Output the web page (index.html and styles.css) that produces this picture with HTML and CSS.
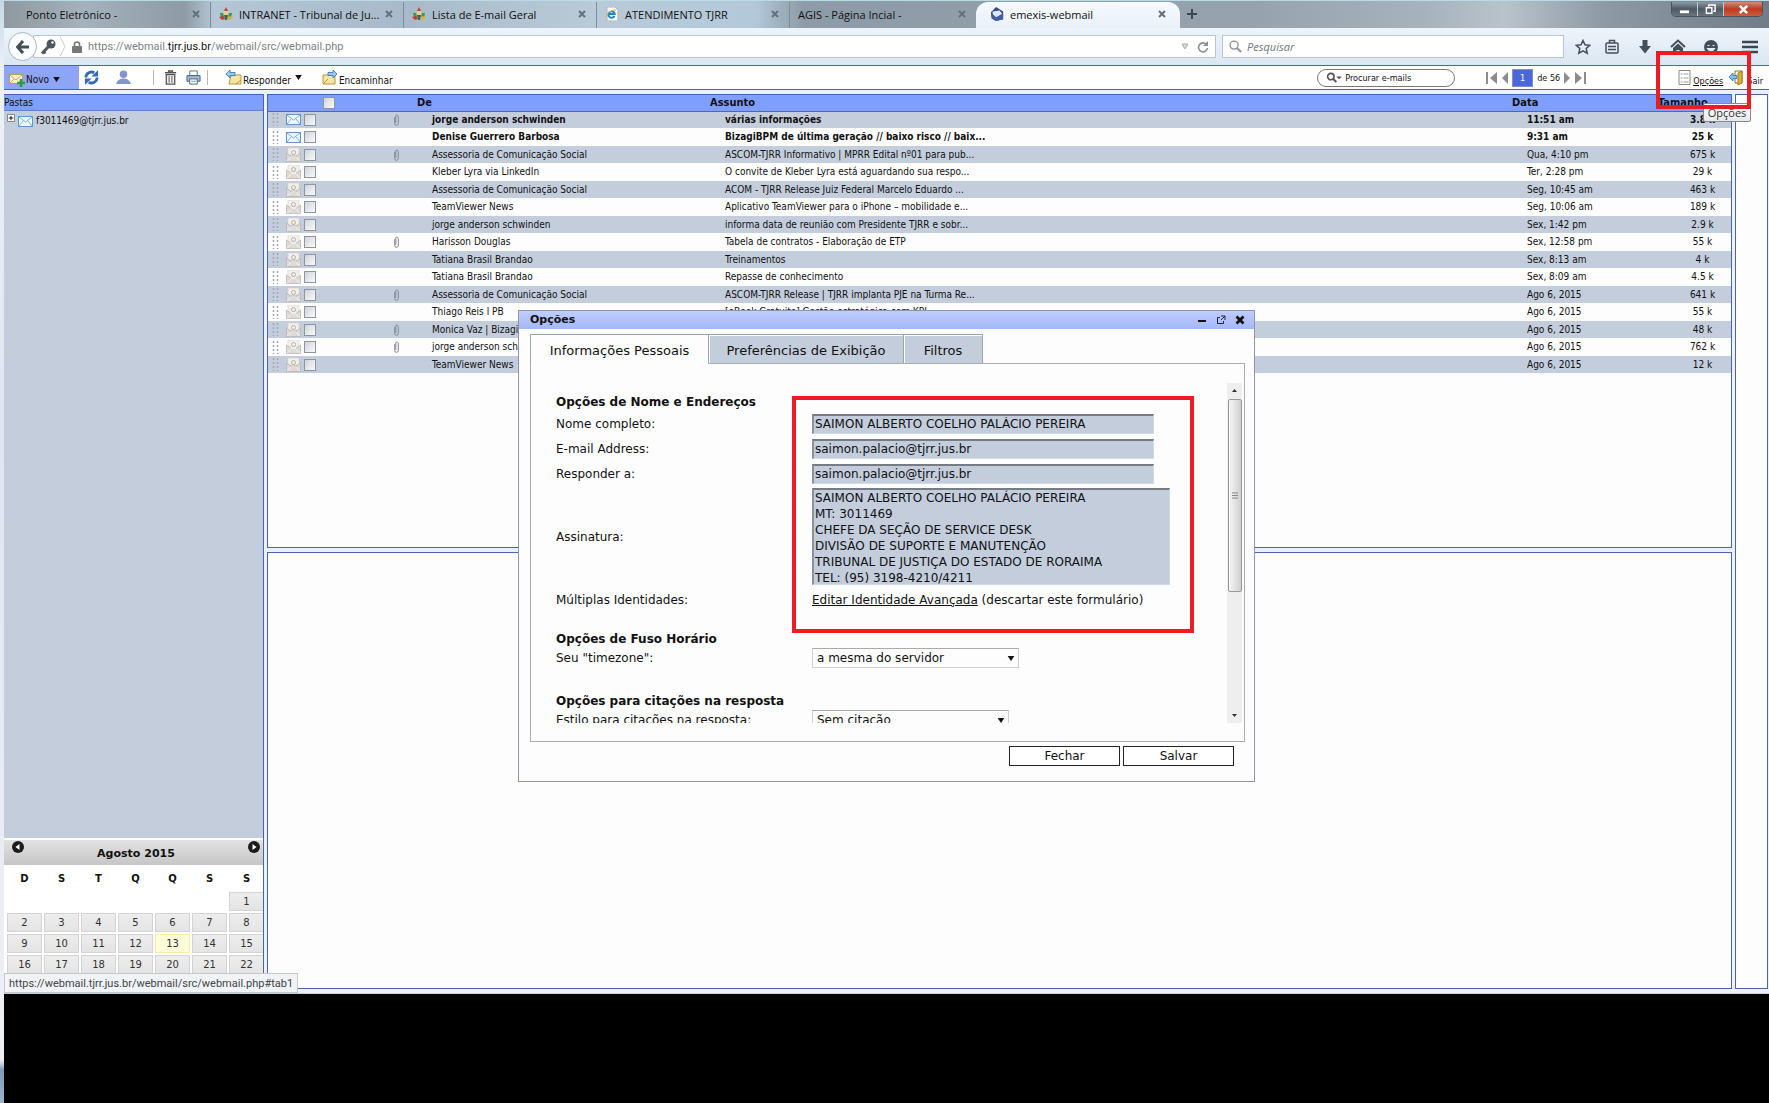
FILE: index.html
```html
<!DOCTYPE html>
<html lang="pt-BR">
<head>
<meta charset="utf-8">
<title>emexis-webmail</title>
<link rel="stylesheet" href="styles.css">
</head>
<body>
<svg class="defs" aria-hidden="true">
  <symbol id="crest" viewBox="0 0 14 14"><path d="M7 0l2 4H5z" fill="#c8402c"/><path d="M5 4h4v4H5z" fill="#e8d090"/><path d="M1 6l3 0 1 4-3 1z" fill="#3f9a48"/><path d="M13 6l-3 0-1 4 3 1z" fill="#3f9a48"/><path d="M0 10l4-1 2 3-3 1z" fill="#c83c30"/><path d="M14 10l-4-1-2 3 3 1z" fill="#d8b040"/><path d="M5 8h4l-1 5H6z" fill="#3c6a50"/></symbol>
  <symbol id="ie" viewBox="0 0 14 14"><path d="M2 0h8l3 3v11H2z" fill="#f8fafc" stroke="#a8b4c0"/><path d="M9.500 9a3.200 3.200 0 1 1 .300-2H4" fill="none" stroke="#1c86c8" stroke-width="1.800"/><path d="M1 10C2 5 7 3 11 3" fill="none" stroke="#e0b040"/></symbol>
  <symbol id="emexis" viewBox="0 0 16 16"><path d="M1 6l6-6 8 5v9l-8 2-5-3z" fill="#3a4a8c"/><path d="M3 5l8-1 3 4-7 4-4-4z" fill="#dfe6f8"/><path d="M1 7l6 5 8-5v7l-8 2-5-3z" fill="#4a5aa0"/></symbol>
  <symbol id="x" viewBox="0 0 8 8"><path d="M1 1l6 6M7 1L1 7" stroke="currentColor" stroke-width="2"/></symbol>
  <symbol id="mail-new" viewBox="0 0 15 11"><rect x=".5" y=".5" width="14" height="10" fill="#eef6ff" stroke="#5f97d2"/><path d="M1 1l6.500 5L14 1M1 10l4-5M14 10l-4-5" fill="none" stroke="#7fb0e0"/></symbol>
  <symbol id="mail-read" viewBox="0 0 15 14"><path d="M2 0h11v7H2z" fill="#f3efea" stroke="#d8d2cc" stroke-width=".6"/><circle cx="7.500" cy="4.500" r="2" fill="none" stroke="#b9afa6"/><path d="M.5 5l5 4h4l5-4v8.500H.5z" fill="#dedad6" stroke="#b8b2ac" stroke-width=".7"/><path d="M1 13l4.500-4h4L14 13" fill="none" stroke="#f4f2f0"/></symbol>
  <symbol id="clip" viewBox="0 0 5 12"><path d="M.7 3v6.500a1.800 1.800 0 0 0 3.600 0V2.500a1.500 1.500 0 0 0-2.500-1V9" fill="none" stroke="#808890"/></symbol>
  <symbol id="grip" viewBox="0 0 7 13"><path d="M1.500 0v13M5.500 0v13" stroke="#a3a8b3" stroke-width="1.500" stroke-dasharray="2 2" fill="none"/></symbol>
  <symbol id="down" viewBox="0 0 8 6"><path d="M0 0h8L4 6z" fill="currentColor"/></symbol>
</svg>

<div class="browser">
  <div class="tabstrip">
    <div class="tab"><span class="tab-title">Ponto Eletrônico -</span><button class="tab-close" aria-label="Fechar aba"><svg><use href="#x"/></svg></button></div>
    <div class="tab"><svg class="fav"><use href="#crest"/></svg><span class="tab-title">INTRANET - Tribunal de Ju...</span><button class="tab-close" aria-label="Fechar aba"><svg><use href="#x"/></svg></button></div>
    <div class="tab"><svg class="fav"><use href="#crest"/></svg><span class="tab-title">Lista de E-mail Geral</span><button class="tab-close" aria-label="Fechar aba"><svg><use href="#x"/></svg></button></div>
    <div class="tab"><svg class="fav"><use href="#ie"/></svg><span class="tab-title">ATENDIMENTO TJRR</span><button class="tab-close" aria-label="Fechar aba"><svg><use href="#x"/></svg></button></div>
    <div class="tab last"><span class="tab-title">AGIS - Página Incial -</span><button class="tab-close" aria-label="Fechar aba"><svg><use href="#x"/></svg></button></div>
    <div class="tab active"><svg class="fav"><use href="#emexis"/></svg><span class="tab-title">emexis-webmail</span><button class="tab-close" aria-label="Fechar aba"><svg><use href="#x"/></svg></button></div>
    <button class="new-tab" aria-label="Nova aba"><svg viewBox="0 0 10 10"><path d="M5 0v10M0 5h10" stroke="#3c4852" stroke-width="2"/></svg></button>
    <div class="win-buttons">
      <button aria-label="Minimizar"><svg viewBox="0 0 12 12"><rect x="1" y="7" width="10" height="3" fill="#fff"/></svg></button>
      <button aria-label="Restaurar"><svg viewBox="0 0 12 12"><path d="M4 3V1h7v7H9M1.500 4h6v6h-6z" fill="none" stroke="#fff" stroke-width="1.600"/></svg></button>
      <button class="win-close" aria-label="Fechar"><svg viewBox="0 0 12 12"><path d="M2 2l8 8M10 2l-8 8" stroke="#fff" stroke-width="2.800"/></svg></button>
    </div>
  </div>

  <div class="navbar">
    <button class="back" aria-label="Voltar"><svg viewBox="0 0 14 14"><path d="M7 1L1.500 7 7 13M2 7h11" fill="none" stroke="#454f5a" stroke-width="3"/></svg></button>
    <div class="urlbox">
      <svg class="key" viewBox="0 0 16 16"><path d="M9 7L2 14.500" stroke="#4c565f" stroke-width="3"/><path d="M3 12l2.500 2.500" stroke="#4c565f" stroke-width="2"/><circle cx="11" cy="5" r="4.500" fill="#4c565f"/><circle cx="12.500" cy="3.500" r="1.200" fill="#fff"/></svg>
      <svg class="chev" viewBox="0 0 6 20"><path d="M0 0l5 10-5 10" fill="none" stroke="#c9d0d8"/></svg>
      <svg class="lock" viewBox="0 0 10 12"><path d="M2.500 6V3.500a2.500 2.500 0 0 1 5 0V6" fill="none" stroke="#777" stroke-width="1.600"/><rect y="5" width="10" height="7" rx="1" fill="#777"/></svg>
      <span class="url">https://webmail.<b>tjrr.jus.br</b>/webmail/src/webmail.php</span>
      <svg class="url-down" viewBox="0 0 8 7"><path d="M1 1h6L4 6z" fill="#ddd" stroke="#aaa"/></svg>
      <svg class="reload" viewBox="0 0 12 12"><path d="M9.500 3.500A4.500 4.500 0 1 0 10.500 7" fill="none" stroke="#8a9096" stroke-width="1.700"/><path d="M11 0v5H6z" fill="#8a9096"/></svg>
    </div>
    <label class="searchbox"><svg viewBox="0 0 14 14"><circle cx="5.500" cy="5.500" r="4.300" fill="none" stroke="#8b9299" stroke-width="1.500"/><path d="M8.500 8.500l4.500 4.500" stroke="#8b9299" stroke-width="2.200"/></svg><input type="text" placeholder="Pesquisar" aria-label="Pesquisar"></label>
    <div class="nav-icons">
      <button class="star" aria-label="Favoritos"><svg viewBox="0 0 16 16"><path d="M8 1.500l2 4.300 4.700.5-3.500 3.200 1 4.700L8 11.900l-4.200 2.300 1-4.700L1.300 6.300 6 5.800z" fill="none" stroke="#454f5a" stroke-width="1.500"/></svg></button>
      <button aria-label="Lista"><svg viewBox="0 0 16 16"><rect x="2" y="4" width="12" height="10" rx="1" fill="none" stroke="#454f5a" stroke-width="1.500"/><path d="M5.500 4V1.500h5V4M4 7.500h8M4 10.500h8" fill="none" stroke="#454f5a" stroke-width="1.500"/></svg></button>
      <button aria-label="Downloads"><svg viewBox="0 0 16 16"><path d="M5.500 1h5v6H14l-6 7.500L2 7h3.500z" fill="#454f5a"/></svg></button>
      <button aria-label="Início"><svg viewBox="0 0 16 16"><path d="M1 8l7-6.500L15 8" fill="none" stroke="#454f5a" stroke-width="2"/><path d="M3 9l5-4.500L13 9v6H9.500v-4h-3v4H3z" fill="#454f5a"/></svg></button>
      <button aria-label="Hello"><svg viewBox="0 0 16 16"><circle cx="8" cy="8" r="7" fill="#454f5a"/><path d="M4.500 6.500h2M9.500 6.500h2M4 9.500c2 3 6 3 8 0z" stroke="#e4ecf5" fill="#e4ecf5"/></svg></button>
      <button class="menu" aria-label="Menu"><svg viewBox="0 0 16 16"><path d="M0 3h16M0 8h16M0 13h16" stroke="#3c4650" stroke-width="2.600"/></svg></button>
    </div>
  </div>

  <div class="toolbar">
    <button class="novo"><svg viewBox="0 0 16 14"><rect x=".5" y="1.500" width="13" height="9" fill="#fff6c0" stroke="#c0a040"/><path d="M1 2l6 5 6-5M1 10l4-4" fill="none" stroke="#c8a850"/><path d="M12 6v8M8 10h8" stroke="#2f9c3c" stroke-width="2.600"/></svg>Novo<svg class="caret"><use href="#down"/></svg></button>
    <button class="t-refresh" aria-label="Atualizar"><svg viewBox="0 0 16 16"><path d="M2 8a6 6 0 0 1 9-5" fill="none" stroke="#3569bd" stroke-width="3"/><path d="M8 7h7V0z" fill="#3569bd"/><path d="M14 8a6 6 0 0 1-9 5" fill="none" stroke="#3569bd" stroke-width="3"/><path d="M8 9H1v7z" fill="#3569bd"/></svg></button>
    <button class="t-user" aria-label="Contatos"><svg viewBox="0 0 16 16"><circle cx="8" cy="4.500" r="4" fill="#8494cc"/><path d="M0 15c1-4 4-6 8-6s7 2 8 6z" fill="#8494cc"/></svg></button>
    <span class="sep"></span>
    <button class="t-trash" aria-label="Excluir"><svg viewBox="0 0 16 16"><path d="M2 3h12M6 2.500V1h4v1.500" fill="none" stroke="#555" stroke-width="1.500"/><path d="M3.500 5h9v10h-9z" fill="#eee" stroke="#555" stroke-width="1.400"/><path d="M6.500 6.500v7M9.500 6.500v7" stroke="#555"/></svg></button>
    <button class="t-print" aria-label="Imprimir"><svg viewBox="0 0 16 16"><path d="M4 1h8v5H4z" fill="#fff" stroke="#55708c"/><path d="M1 6h14v6H1z" fill="#a8b8d0" stroke="#44607c"/><path d="M4 9.500h8V15H4z" fill="#fff" stroke="#44607c"/><path d="M5.500 12h5" stroke="#5f97d2"/></svg></button>
    <span class="sep"></span>
    <button class="t-reply"><svg viewBox="0 0 16 15"><path d="M5 5h10v9H3z" fill="#f3e6a4" stroke="#b89838"/><path d="M10 14l5-4" stroke="#b89838"/><path d="M0 4l4-4v2.500h5v3H4V8z" fill="#9ccaf0" stroke="#2f6eb4" stroke-width=".8"/></svg><span>Responder</span><svg class="caret"><use href="#down"/></svg></button>
    <button class="t-fwd"><svg viewBox="0 0 16 15"><path d="M1 5h12v9H1z" fill="#f3e6a4" stroke="#b89838"/><path d="M1 14l5-5" stroke="#b89838"/><path d="M15 4l-4-4v2.500H6v3h5V8z" fill="#9ccaf0" stroke="#2f6eb4" stroke-width=".8"/></svg><span>Encaminhar</span></button>
    <label class="mail-search"><svg viewBox="0 0 18 12"><circle cx="5" cy="5" r="3.500" fill="none" stroke="#555" stroke-width="1.800"/><path d="M7.500 7.500L11 11" stroke="#555" stroke-width="2.200"/><path d="M11 5h6l-3 3z" fill="#555"/></svg><input type="text" value="Procurar e-mails" aria-label="Procurar e-mails"></label>
    <div class="pager">
      <button aria-label="Primeira"><svg viewBox="0 0 12 12"><path d="M1 0v12" stroke="#8c8c8c" stroke-width="2"/><path d="M11 0v12L4 6z" fill="#8c8c8c"/></svg></button>
      <button class="step" aria-label="Anterior"><svg viewBox="0 0 6 12"><path d="M6 0v12L0 6z" fill="#8c8c8c"/></svg></button>
      <input class="page" type="text" value="1" aria-label="Página"><span>de 56</span>
      <button class="step" aria-label="Próxima"><svg viewBox="0 0 6 12"><path d="M0 0v12l6-6z" fill="#8c8c8c"/></svg></button>
      <button aria-label="Última"><svg viewBox="0 0 12 12"><path d="M11 0v12" stroke="#8c8c8c" stroke-width="2"/><path d="M1 0v12l7-6z" fill="#8c8c8c"/></svg></button>
    </div>
    <a class="opt-link" href="#tab1"><svg viewBox="0 0 12 15"><path d="M.5.500h11v14H.5z" fill="#fff" stroke="#8a8a8a"/><path d="M2 4h2M2 8h2M2 12h2M5 4h5M5 8h5M5 12h5" stroke="#9a9a9a"/></svg><span>Opções</span></a>
    <a class="exit-link" href="#sair"><svg viewBox="0 0 14 15"><path d="M6 1h7v12H6z" fill="#fff" stroke="#8a7030"/><path d="M9 3l4-2v12l-4 2z" fill="#e0b030" stroke="#a07c1c"/><path d="M0 7l4-4v2.500h4v3H4V11z" fill="#8cc0ee" stroke="#2f6eb4" stroke-width=".8"/></svg><span>Sair</span></a>
  </div>

  <div class="workspace">
    <aside class="panel sidebar">
      <h2 class="side-head">Pastas</h2>
      <div class="tree"><svg class="plus" viewBox="0 0 9 9"><path d="M.5.500h8v8h-8z" fill="#fff" stroke="#777"/><path d="M2 4.500h5M4.500 2v5" stroke="#000"/></svg><svg class="tree-mail"><use href="#mail-new"/></svg><a href="#inbox">f3011469@tjrr.jus.br</a></div>
      <div class="calendar">
        <div class="cal-head">
          <button aria-label="Mês anterior"><svg viewBox="0 0 12 12"><circle cx="6" cy="6" r="6" fill="#1c1c1c"/><path d="M7.500 3v6l-4-3z" fill="#fff"/></svg></button>
          <strong>Agosto 2015</strong>
          <button aria-label="Próximo mês"><svg viewBox="0 0 12 12"><circle cx="6" cy="6" r="6" fill="#1c1c1c"/><path d="M4.500 3v6l4-3z" fill="#fff"/></svg></button>
        </div>
        <table>
          <thead><tr><th>D</th><th>S</th><th>T</th><th>Q</th><th>Q</th><th>S</th><th>S</th></tr></thead>
          <tbody>
            <tr><td></td><td></td><td></td><td></td><td></td><td></td><td><a href="#d1">1</a></td></tr>
            <tr><td><a href="#d2">2</a></td><td><a href="#d3">3</a></td><td><a href="#d4">4</a></td><td><a href="#d5">5</a></td><td><a href="#d6">6</a></td><td><a href="#d7">7</a></td><td><a href="#d8">8</a></td></tr>
            <tr><td><a href="#d9">9</a></td><td><a href="#d10">10</a></td><td><a href="#d11">11</a></td><td><a href="#d12">12</a></td><td><a class="today" href="#d13">13</a></td><td><a href="#d14">14</a></td><td><a href="#d15">15</a></td></tr>
            <tr><td><a href="#d16">16</a></td><td><a href="#d17">17</a></td><td><a href="#d18">18</a></td><td><a href="#d19">19</a></td><td><a href="#d20">20</a></td><td><a href="#d21">21</a></td><td><a href="#d22">22</a></td></tr>
          </tbody>
        </table>
      </div>
    </aside>

    <main class="center">
      <section class="panel list">
        <table class="mails">
          <colgroup><col class="c-grip"><col class="c-mail"><col class="c-check"><col class="c-clip"><col class="c-from"><col><col class="c-date"><col class="c-size"></colgroup>
          <thead><tr><th></th><th></th><th class="all"><input type="checkbox" aria-label="Selecionar todos"></th><th></th><th>De</th><th>Assunto</th><th>Data</th><th>Tamanho</th></tr></thead>
          <tbody id="rows"></tbody>
        </table>
      </section>
      <section class="panel preview"></section>
    </main>
    <aside class="panel strip"></aside>
  </div>
  <div class="status">https://webmail.tjrr.jus.br/webmail/src/webmail.php#tab1</div>
  <div class="tooltip">Opções</div>
  <div class="mark mark-top"></div>

  <section class="dialog" role="dialog" aria-labelledby="dlg-title">
    <header class="dlg-head">
      <h1 id="dlg-title">Opções</h1>
      <button aria-label="Minimizar"><svg viewBox="0 0 10 10"><path d="M1 6h8" stroke="#111" stroke-width="2"/></svg></button>
      <button aria-label="Restaurar"><svg viewBox="0 0 10 10"><path d="M4 2.500H1.500v6h6V6M5 1h4v4M9 1L5 5" fill="none" stroke="#223"/></svg></button>
      <button aria-label="Fechar janela"><svg viewBox="0 0 10 10"><path d="M1.500 1.500l7 7M8.500 1.500l-7 7" stroke="#111" stroke-width="2.800"/></svg></button>
    </header>
    <div class="dlg-body">
      <nav class="dlg-tabs"><a class="on" href="#tab1">Informações Pessoais</a><a class="wide" href="#tab2">Preferências de Exibição</a><a class="short" href="#tab3">Filtros</a></nav>
      <div class="pane">
        <div class="scroll">
          <form class="form">
            <h3>Opções de Nome e Endereços</h3>
            <div class="row"><label for="nome">Nome completo:</label><input id="nome" class="field" type="text" value="SAIMON ALBERTO COELHO PALÁCIO PEREIRA"></div>
            <div class="row"><label for="mail">E-mail Address:</label><input id="mail" class="field" type="text" value="saimon.palacio@tjrr.jus.br"></div>
            <div class="row"><label for="resp">Responder a:</label><input id="resp" class="field" type="text" value="saimon.palacio@tjrr.jus.br"></div>
            <div class="row tall"><label for="sig">Assinatura:</label><textarea id="sig" class="field">SAIMON ALBERTO COELHO PALÁCIO PEREIRA
MT: 3011469
CHEFE DA SEÇÃO DE SERVICE DESK
DIVISÃO DE SUPORTE E MANUTENÇÃO
TRIBUNAL DE JUSTIÇA DO ESTADO DE RORAIMA
TEL: (95) 3198-4210/4211</textarea></div>
            <div class="row"><span>Múltiplas Identidades:</span><span><a href="#identidade">Editar Identidade Avançada</a> (descartar este formulário)</span></div>
            <h3 class="spaced">Opções de Fuso Horário</h3>
            <div class="row tight"><label for="tz">Seu "timezone":</label><span class="pick"><select id="tz"><option>a mesma do servidor</option></select><svg><use href="#down"/></svg></span></div>
            <h3 class="spaced">Opções para citações na resposta</h3>
            <div class="row tight"><label for="cit">Estilo para citações na resposta:</label><span class="pick narrow"><select id="cit"><option>Sem citação</option></select><svg><use href="#down"/></svg></span></div>
          </form>
          <div class="scrollbar"><svg viewBox="0 0 7 5"><path d="M1 4h5L3.500 1z" fill="#333"/></svg><div class="thumb"><svg viewBox="0 0 7 9"><path d="M0 1.500h7M0 4.500h7M0 7.500h7" stroke="#777"/></svg></div><div class="track"></div><svg viewBox="0 0 7 5"><path d="M1 1h5L3.500 4z" fill="#333"/></svg></div>
        </div>
      </div>
      <footer class="dlg-foot"><button>Fechar</button><button>Salvar</button></footer>
    </div>
    <div class="mark mark-form"></div>
  </section>
</div>
<div class="blank"></div>
<script src="rows.js"></script>
</body>
</html>
```
FILE: rows.js
```js
// name, subject, date, size, has attachment, unread
const mails = [
  ["jorge anderson schwinden", "várias informações", "11:51 am", "3.8 k", 1, 1],
  ["Denise Guerrero Barbosa", "BizagiBPM de última geração // baixo risco // baix...", "9:31 am", "25 k", 0, 1],
  ["Assessoria de Comunicação Social", "ASCOM-TJRR Informativo | MPRR Edital nº01 para pub...", "Qua, 4:10 pm", "675 k", 1, 0],
  ["Kleber Lyra via LinkedIn", "O convite de Kleber Lyra está aguardando sua respo...", "Ter, 2:28 pm", "29 k", 0, 0],
  ["Assessoria de Comunicação Social", "ACOM - TJRR Release Juiz Federal Marcelo Eduardo ...", "Seg, 10:45 am", "463 k", 0, 0],
  ["TeamViewer News", "Aplicativo TeamViewer para o iPhone – mobilidade e...", "Seg, 10:06 am", "189 k", 0, 0],
  ["jorge anderson schwinden", "informa data de reunião com Presidente TJRR e sobr...", "Sex, 1:42 pm", "2.9 k", 0, 0],
  ["Harisson Douglas", "Tabela de contratos - Elaboração de ETP", "Sex, 12:58 pm", "55 k", 1, 0],
  ["Tatiana Brasil Brandao", "Treinamentos", "Sex, 8:13 am", "4 k", 0, 0],
  ["Tatiana Brasil Brandao", "Repasse de conhecimento", "Sex, 8:09 am", "4.5 k", 0, 0],
  ["Assessoria de Comunicação Social", "ASCOM-TJRR Release | TJRR implanta PJE na Turma Re...", "Ago 6, 2015", "641 k", 1, 0],
  ["Thiago Reis l PB", "[eBook Gratuito] Gestão estratégica com KPI", "Ago 6, 2015", "55 k", 0, 0],
  ["Monica Vaz | Bizagi", "", "Ago 6, 2015", "48 k", 1, 0],
  ["jorge anderson schwinden", "", "Ago 6, 2015", "762 k", 1, 0],
  ["TeamViewer News", "", "Ago 6, 2015", "12 k", 0, 0]
];
document.getElementById("rows").innerHTML = mails.map(([from, subject, date, size, clip, unread]) =>
  `<tr class="${unread ? "unread" : ""}">
    <td><svg class="i-grip"><use href="#grip"/></svg></td>
    <td><svg class="${unread ? "i-new" : "i-read"}"><use href="#mail-${unread ? "new" : "read"}"/></svg></td>
    <td><input type="checkbox" aria-label="Selecionar ${from}"></td>
    <td>${clip ? '<svg class="i-clip"><use href="#clip"/></svg>' : ""}</td>
    <td class="txt">${from}</td><td class="txt">${subject}</td><td class="txt">${date}</td><td class="size">${size}</td>
  </tr>`).join("");
```
FILE: styles.css
```css
* { box-sizing: border-box; }
body {
  margin: 0;
  min-height: 100vh;
  display: flex;
  flex-direction: column;
  padding-left: 4px;
  background: linear-gradient(#c4d8e8 0, #eef2f6 70px, #dfe6f0 420px, #eef0f4 1060px, #7e9ab8 1070px, #9cb4cc);
  font-family: "DejaVu Sans Condensed", "DejaVu Sans", sans-serif;
  font-size: 11px;
  color: #111;
}
button, input, select, textarea { font: inherit; color: inherit; margin: 0; padding: 0; border: 0; background: none; border-radius: 0; }
svg { display: block; flex: none; }
.defs { position: absolute; width: 0; height: 0; }
a { color: inherit; }

.browser { position: relative; flex: 1; display: flex; flex-direction: column; background: #fafbfd; }

/* tab strip */
.tabstrip {
  display: flex;
  height: 28px;
  padding: 1px 6px 0 14px;
  border-top: 1px solid #b9dbe6;
  background: linear-gradient(90deg, #8f989f 0, #a4b2bc 80px, #8e9ba6 180px, #b5c6d6 210px, #a8bac9 400px, #b9cad8 590px, #b3c9da 750px, #8c9ba7 800px, #96a3ae 1250px, #a6b2bc 1420px, #b9c3cc 1500px, #8d99a4 1600px, #707d89);
  font-family: "Open Sans", sans-serif;
  font-size: 11px;
}
.tab { width: 193px; display: flex; align-items: center; gap: 6px; padding: 0 10px 2px 8px; border-right: 1px solid #7f8d99; }
.tab.last { border: 0; width: 186px; }
.tab.active { width: 204px; padding: 0 14px 2px; background: linear-gradient(#f6fafd, #e9f1f9); border: 0; border-radius: 12px 12px 0 0; }
.fav { width: 14px; height: 14px; }
.tab-title { flex: 1; white-space: nowrap; }
.tab-close { color: #65717b; }
.tab-close svg { width: 8px; height: 8px; }
.new-tab { width: 24px; display: flex; align-items: center; justify-content: center; padding-bottom: 2px; }
.new-tab svg { width: 10px; height: 10px; }
.win-buttons { margin-left: auto; display: flex; align-self: flex-start; height: 15px; border: 1px solid #4a535c; border-top: 0; border-radius: 0 0 5px 5px; overflow: hidden; }
.win-buttons button { width: 26px; display: flex; align-items: center; justify-content: center; background: linear-gradient(#8f99a3, #4f5963 50%, #69737d); border-right: 1px solid #c0c8d0; }
.win-buttons .win-close { width: 38px; border: 0; background: linear-gradient(#d98a78, #bd3b22 50%, #cf5a3c); }
.win-buttons svg { width: 11px; height: 11px; }

/* navigation bar */
.navbar { display: flex; align-items: center; height: 37px; padding: 0 11px 0 4px; background: linear-gradient(#edf4fb, #dce7f3); font-size: 11px; }
.back { width: 29px; height: 29px; border: 1px solid #aab6c2; border-radius: 50%; background: #fbfcfe; display: flex; align-items: center; justify-content: center; z-index: 1; }
.back svg { width: 14px; height: 14px; }
.urlbox { flex: 1; height: 23px; margin-left: -4px; padding: 0 6px; display: flex; align-items: center; background: #fff; border: 1px solid #b8c6d4; color: #7c8187; }
.key { width: 16px; height: 16px; }
.chev { width: 6px; height: 21px; margin: 0 6px 0 4px; }
.lock { width: 10px; height: 12px; margin-right: 6px; }
.url { flex: 1; font-family: Roboto, sans-serif; white-space: nowrap; }
.url b { font-weight: 400; color: #111; }
.url-down { width: 8px; height: 7px; margin-right: 8px; }
.reload { width: 12px; height: 12px; }
.searchbox { width: 342px; height: 23px; margin-left: 6px; padding: 0 6px; display: flex; align-items: center; gap: 5px; background: #fff; border: 1px solid #b8c6d4; font-family: "Open Sans", sans-serif; }
.searchbox svg { width: 13px; height: 13px; }
.searchbox input { flex: 1; min-width: 0; font-style: italic; }
.searchbox input::placeholder { color: #6f757b; opacity: 1; }
.nav-icons { display: flex; gap: 17px; margin-left: 11px; }
.nav-icons svg { width: 16px; height: 16px; }
.nav-icons .star { margin-right: -4px; }
.nav-icons .menu { margin-left: 6px; }

/* mail toolbar */
.toolbar { display: flex; align-items: center; height: 25px; padding-right: 6px; background: #fff; border-top: 1px solid #4a62b8; border-bottom: 1px solid #4a62b8; font-size: 10px; }
.toolbar button, .toolbar a { display: flex; align-items: center; }
.toolbar .novo { width: 75px; height: 23px; padding: 4px 0 0 5px; gap: 1px; background: #8ea4f4; }
.novo svg { width: 16px; height: 14px; }
.toolbar .caret { width: 7px; height: 5px; margin-left: 3px; }
.t-refresh { margin-left: 5px; }
.t-user { margin-left: 17px; }
.t-refresh svg, .t-user svg, .t-trash svg, .t-print svg { width: 15px; height: 15px; }
.sep { width: 1px; height: 15px; background: #b8b8b8; margin: 0 9px 0 22px; }
.t-print { margin-left: 8px; }
.t-print + .sep { margin: 0 18px 0 6px; }
.t-reply, .t-fwd { gap: 1px; }
.t-reply span, .t-fwd span, .opt-link span, .exit-link span { padding-top: 6px; }
.t-reply svg, .t-fwd svg { width: 16px; height: 15px; }
.t-fwd { margin-left: 20px; }
.mail-search { width: 138px; height: 18px; margin-left: auto; padding: 0 8px; display: flex; align-items: center; gap: 2px; border: 1px solid #777; border-radius: 9px; background: #fff; font-size: 9px; }
.mail-search svg { width: 17px; height: 11px; }
.mail-search input { width: 90px; }
.pager { display: flex; align-items: center; gap: 4px; margin: 0 92px 0 31px; font-size: 9px; }
.pager svg { width: 12px; height: 12px; }
.pager .step svg { width: 6px; }
.pager .page { width: 21px; height: 18px; text-align: center; background: #4a68dc; color: #fff; border: 1px solid #8090c0; }
.opt-link svg { width: 13px; height: 15px; }
.opt-link { gap: 2px; margin-right: 6px; font-size: 9px; }
.exit-link { gap: 4px; text-decoration: none; font-size: 9px; }
.exit-link svg { width: 14px; height: 15px; }

/* workspace */
.workspace { flex: 1; display: grid; grid-template-columns: 260px 1fr 33px; gap: 3px; padding: 4px 1px 4px 0; background: #eaf1fb; }
.panel { background: #fdfdfd; border: 1px solid #4a62b0; }
.sidebar { display: flex; flex-direction: column; background: #c3cddc; overflow: hidden; border-left: 0; }
.side-head { margin: 0; height: 16px; background: #7f9ffe; font-size: 10px; font-weight: 400; line-height: 15px; border-bottom: 1px solid #6080d0; }
.tree { flex: 1; display: flex; align-items: flex-start; gap: 3px; padding: 3px; font-size: 10px; }
.plus { width: 8px; height: 8px; }
.tree-mail { width: 15px; height: 11px; margin: 2px 0 0 0; }
.tree a { text-decoration: none; line-height: 14px; }
.calendar { height: 150px; background: #fff; border-top: 2px solid #fff; overflow: hidden; font-family: "DejaVu Sans", sans-serif; font-size: 10px; flex: none; }
.cal-head { display: flex; justify-content: space-between; height: 25px; padding: 1px 3px 0 8px; background: linear-gradient(#e2e2e2, #c6c6c6); }
.cal-head svg { width: 12px; height: 12px; }
.cal-head strong { font-size: 11px; line-height: 25px; }
.cal-head button { align-self: flex-start; }
.calendar table { width: 261px; margin-left: 1px; table-layout: fixed; border-spacing: 2px; }
.calendar th { height: 23px; padding: 0; }
.calendar td { height: 19px; padding: 0; }
.calendar td a { display: block; height: 19px; line-height: 17px; border: 1px solid #d3d3d3; background: linear-gradient(#ededed, #e4e4e4); text-align: center; text-decoration: none; color: #333; }
.calendar td .today { background: #fefbd8; border-color: #f6eda8; }
.center { display: grid; grid-template-rows: 454px 1fr; gap: 4px; min-width: 0; }

/* message list */
.mails { width: 100%; table-layout: fixed; border-collapse: collapse; font-size: 10px; }
.c-grip { width: 18px; } .c-mail { width: 18px; } .c-check { width: 84px; } .c-clip { width: 29px; }
.c-from { width: 293px; } .c-date { width: 146px; } .c-size { width: 73px; }
.mails th { height: 16px; padding: 0; background: #7f9ffe; border-bottom: 1px solid #4f68b0; text-align: left; font-size: 11px; line-height: 14px; }
.mails td { height: 17px; padding: 0; white-space: nowrap; line-height: 14px; }
.mails tbody tr:nth-child(odd) { background: #c3cddc; }
.mails tbody tr:nth-child(even) td { height: 18px; }
.mails td.txt { padding-left: 15px; overflow: hidden; }
.mails td.size { padding-left: 16px; text-align: center; }
.unread { font-weight: 700; }
.mails input { appearance: none; display: block; width: 12px; height: 12px; border: 1px solid #8e96a2; background: linear-gradient(135deg, #d0d4da, #fafafa); }
.mails .all input { margin-left: 19px; }
.i-grip { width: 7px; height: 13px; margin-left: 4px; }
.i-new { width: 15px; height: 11px; }
.i-read { width: 15px; height: 14px; }
.i-clip { width: 5px; height: 12px; margin-left: 6px; }

.status { position: absolute; left: 0; bottom: 0; height: 20px; padding: 0 4px; border: 1px solid #c3c8ce; background: #f0f3f8; font-family: Roboto, sans-serif; font-size: 11px; line-height: 19px; color: #444; }
.tooltip { position: absolute; right: 18px; top: 103px; width: 48px; height: 19px; background: linear-gradient(#fff, #e6e8f0); border: 1px solid #8a8a8a; border-radius: 2px; font-family: "Open Sans", sans-serif; line-height: 17px; text-align: center; color: #333; }
.mark { position: absolute; border: 4px solid #ec1c24; pointer-events: none; }
.mark-top { right: 18px; top: 51px; width: 95px; height: 58px; }
.blank { height: 110px; background: #000; border-top: 1px solid #c8ccd4; }

/* options window */
.dialog { position: absolute; left: 514px; top: 310px; width: 737px; background: #fdfdfd; border: 1px solid #8f96ac; font-family: "DejaVu Sans", sans-serif; font-size: 12px; }
.dlg-head { display: flex; align-items: center; height: 18px; padding: 0 9px 0 11px; gap: 9px; background: linear-gradient(#bfcdff, #a3b8f6); }
.dlg-head h1 { flex: 1; margin: 0; font-size: 11px; line-height: 16px; }
.dlg-head svg { width: 10px; height: 10px; }
.dlg-body { padding: 5px 9px 15px 11px; }
.dlg-tabs { display: flex; height: 29px; }
.dlg-tabs a { width: 179px; border: 1px solid #9aa3b3; border-bottom: 0; background: #c3cddc; text-align: center; text-decoration: none; font-size: 13px; line-height: 32px; box-shadow: inset 1px 1px #fff; }
.dlg-tabs a + a { border-left: 0; }
.dlg-tabs .on { background: #fdfdfd; height: 30px; z-index: 1; }
.dlg-tabs .wide { width: 195px; }
.dlg-tabs .short { width: 79px; }
.pane { border: 1px solid #a8adb8; padding: 19px 2px 18px 25px; }
.scroll { display: flex; height: 340px; overflow: hidden; }
.form { flex: 1; padding-top: 8px; }
.form h3 { margin: 0; height: 20px; font-size: 12px; line-height: 22px; }
.form .row + .spaced { margin-top: 16px; }
.form .tight + .spaced { margin-top: 22px; }
.row { display: grid; grid-template-columns: 256px 1fr; align-items: center; height: 25px; white-space: nowrap; }
.row.tall { height: 101px; }
.row.tight { height: 20px; }
.field { width: 342px; height: 20px; padding: 0 1px; background: #c3cddc; border: 1px solid #d4dbe6; border-top: 2px solid #777c84; border-left: 2px solid #8c929b; }
textarea.field { width: 358px; height: 97px; line-height: 16px; overflow: hidden; resize: none; }
.pick { display: flex; align-items: center; width: 207px; height: 20px; border: 1px solid #d0d0d0; border-top-color: #aaa; }
.pick.narrow { width: 197px; }
.pick select { appearance: none; flex: 1; padding-left: 4px; }
.pick svg { width: 8px; height: 5px; margin: 0 3px 0 -11px; pointer-events: none; }
.scrollbar { width: 15px; display: flex; flex-direction: column; align-items: center; background: #eee; padding: 5px 0; }
.scrollbar > svg { width: 7px; height: 5px; }
.thumb { width: 14px; height: 193px; margin-top: 6px; border: 1px solid #999; border-radius: 2px; background: linear-gradient(90deg, #f6f6f6, #cfcfcf); display: flex; align-items: center; justify-content: center; }
.thumb svg { width: 6px; height: 9px; }
.track { flex: 1; }
.dlg-foot { display: flex; justify-content: flex-end; gap: 3px; padding: 4px 11px 0 0; }
.dlg-foot button { width: 111px; height: 20px; border: 1px solid #222; background: #fff; }
.mark-form { left: 273px; top: 85px; width: 402px; height: 237px; }
```
